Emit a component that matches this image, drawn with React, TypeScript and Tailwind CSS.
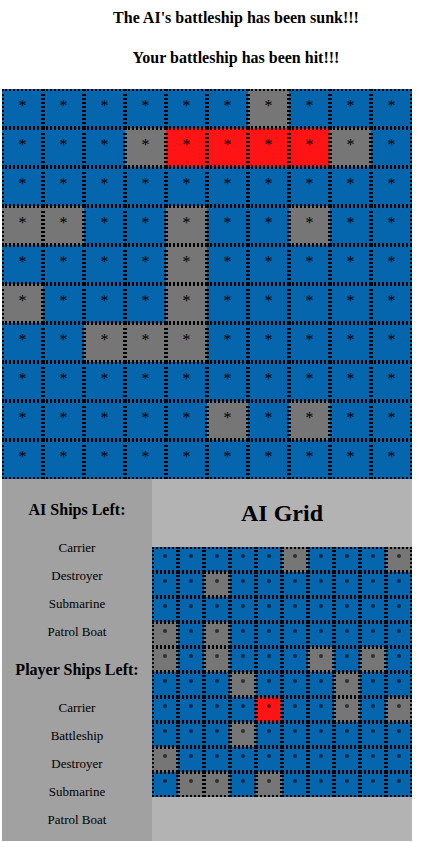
type Cell = "w" | "m" | "h";

const playerRows: string[] = [
    "......m...",
    "...mhhhhm.",
    "..........",
    "mm..m..m..",
    "....m.....",
    "m...m.....",
    "..mmm.....",
    "..........",
    ".....m.m..",
    "..........",
];

const aiRows: string[] = [
    ".....m...m",
    "..m.......",
    "..........",
    "m.m.......",
    "m.m...m.m.",
    "...m...m..",
    "....h..m.m",
    "...m......",
    "m.........",
    ".mm.m.....",
];

const toCells = (rows: string[]): Cell[] =>
    rows.join("").split("").map((c) => (c === "m" ? "m" : c === "h" ? "h" : "w"));

const cellBg = (c: Cell) =>
    c === "h" ? "bg-[#fe1414]" : c === "m" ? "bg-[#767676]" : "bg-[#0666ad]";

const aiShips = ["Carrier", "Destroyer", "Submarine", "Patrol Boat"];
const playerShips = ["Carrier", "Battleship", "Destroyer", "Submarine", "Patrol Boat"];

export default function App() {
    return (
        <div className="[font-family:'Liberation_Serif',serif] text-black bg-white min-h-[842px]">

            {/* Messages */}
            <div className="pt-[9px] pl-[41px] text-center">
                <h4 className="text-[16px] font-bold leading-[18px]">
                    The AI's battleship has been sunk!!!
                </h4>
                <h4 className="mt-[22px] text-[16px] font-bold leading-[18px]">
                    Your battleship has been hit!!!
                </h4>
            </div>

            {/* Player grid */}
            <div className="ml-[2px] mt-[22px] w-[410px] grid grid-cols-10">
                {toCells(playerRows).map((c, i) => (
                    <div
                        key={i}
                        className={`h-[39px] border-2 border-dotted border-black flex items-center justify-center pb-[6px] text-[16px] ${cellBg(c)}`}
                    >
                        *
                    </div>
                ))}
            </div>

            {/* Bottom section */}
            <div className="ml-[2px] w-[410px] flex">

                {/* Ships left */}
                <div className="w-[150px] bg-[#a1a1a1] text-center pt-[21px] pb-[14px] flex flex-col">
                    <h4 className="text-[16px] font-bold leading-[19px]">AI Ships Left:</h4>
                    <div className="mt-[21px] flex flex-col gap-[13px]">
                        {aiShips.map((s) => (
                            <p key={s} className="text-[13px] leading-[15px]">{s}</p>
                        ))}
                    </div>
                    <h4 className="mt-[21px] text-[16px] font-bold leading-[19px]">Player Ships Left:</h4>
                    <div className="mt-[21px] flex flex-col gap-[13px]">
                        {playerShips.map((s) => (
                            <p key={s} className="text-[13px] leading-[15px]">{s}</p>
                        ))}
                    </div>
                </div>

                {/* AI grid */}
                <div className="w-[260px] bg-[#b3b3b3]">
                    <h2 className="my-[20px] text-center text-[24px] font-bold leading-[28px]">AI Grid</h2>
                    <div className="grid grid-cols-10">
                        {toCells(aiRows).map((c, i) => (
                            <div
                                key={i}
                                className={`h-[25px] border-2 border-dotted border-black flex items-center justify-center pb-[8px] ${cellBg(c)}`}
                            >
                                <span className="w-[4px] h-[4px] rounded-full bg-black/60" />
                            </div>
                        ))}
                    </div>
                </div>
            </div>
        </div>
    );
}
